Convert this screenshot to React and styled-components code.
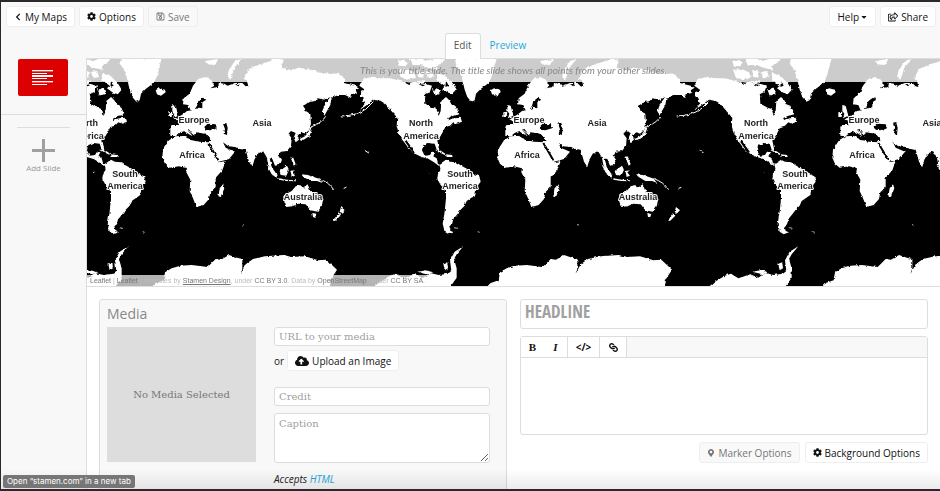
import { useLayoutEffect, useRef, useState } from 'react';
import styled, { createGlobalStyle, css } from 'styled-components';
import {
  FaCaretDown,
  FaChevronLeft,
  FaCloudUploadAlt,
  FaCog,
  FaLink,
  FaMapMarkerAlt,
  FaRegSave,
  FaRegShareSquare,
} from 'react-icons/fa';

const WORLD_WIDTH = 335;
const FIRST_WORLD = -82;

const LABELS = [
  { text: 'North', x: 81, y: 67 },
  { text: 'America', x: 81, y: 80 },
  { text: 'South', x: 120, y: 118 },
  { text: 'America', x: 120, y: 130 },
  { text: 'Europe', x: 189, y: 64 },
  { text: 'Africa', x: 187, y: 99 },
  { text: 'Asia', x: 257, y: 67 },
  { text: 'Australia', x: 298, y: 141 },
];

export default function App() {
  return (
    <Window>
      <GlobalStyle />
      <Toolbar>
        <ToolbarGroup>
          <Button>
            <FaChevronLeft size={8} /> My Maps
          </Button>
          <Button>
            <FaCog size={9} /> Options
          </Button>
          <Button disabled>
            <FaRegSave size={9} /> Save
          </Button>
        </ToolbarGroup>
        <ToolbarGroup>
          <Button $tight>
            Help <FaCaretDown size={8} />
          </Button>
          <Button>
            <FaRegShareSquare size={10} /> Share
          </Button>
        </ToolbarGroup>
      </Toolbar>
      <Tabs>
        <Tab href="#edit" $active>
          Edit
        </Tab>
        <Tab href="#preview">Preview</Tab>
      </Tabs>
      <Workspace>
        <Sidebar>
          <SlideList>
            <SlideThumb aria-label="Title slide">
              <svg width="22" height="16" viewBox="0 0 22 16" fill="#fff">
                <path d="M0 0h21v1H0zM0 3h15v1H0zM0 5h21v2H0zM0 8h15v1H0zM0 11h21v1H0zM0 14h15v1H0z" />
                <path d="M0 1h21v1H0zM0 12h21v1H0z" opacity=".35" />
              </svg>
            </SlideThumb>
          </SlideList>
          <AddSlide>
            <svg width="23" height="23" viewBox="0 0 23 23" fill="#a0a0a0">
              <path d="M10 0h3v10h10v3H13v10h-3V13H0v-3h10z" />
            </svg>
            Add Slide
          </AddSlide>
        </Sidebar>
        <Main>
          <MapPane>
            <WorldMap />
            <MapHint>
              This is your title slide. The title slide shows all points from your other slides.
            </MapHint>
            <Attribution>
              <a href="#leaflet">Leaflet</a> | <a href="#leaflet">Leaflet</a> | Map tiles by{' '}
              <a href="#stamen">
                <u>Stamen Design</u>
              </a>
              , under <a href="#ccby">CC BY 3.0</a>. Data by <a href="#osm">OpenStreetMap</a>, under{' '}
              <a href="#ccbysa">CC BY SA</a>.
            </Attribution>
          </MapPane>
          <Editor>
            <MediaCard>
              <MediaTitle>Media</MediaTitle>
              <MediaGrid>
                <MediaPreview>No Media Selected</MediaPreview>
                <MediaFields>
                  <TextInput aria-label="URL to your media" placeholder="URL to your media" />
                  <UploadRow>
                    or
                    <Button>
                      <FaCloudUploadAlt size={14} /> Upload an Image
                    </Button>
                  </UploadRow>
                  <TextInput aria-label="Credit" placeholder="Credit" />
                  <CaptionInput aria-label="Caption" placeholder="Caption" />
                  <Accepts>
                    Accepts <a href="#html">HTML</a>
                  </Accepts>
                </MediaFields>
              </MediaGrid>
            </MediaCard>
            <TextColumn>
              <HeadlineInput aria-label="Headline" placeholder="HEADLINE" />
              <RichText>
                <RichBar>
                  <RichGroup>
                    <RichButton aria-label="Bold">
                      <b>B</b>
                    </RichButton>
                    <RichButton aria-label="Italic">
                      <b>
                        <i>I</i>
                      </b>
                    </RichButton>
                  </RichGroup>
                  <RichGroup>
                    <CodeButton aria-label="HTML">&lt;/&gt;</CodeButton>
                  </RichGroup>
                  <RichGroup>
                    <LinkButton aria-label="Link">
                      <FaLink size={9} />
                    </LinkButton>
                  </RichGroup>
                </RichBar>
                <RichBody aria-label="Slide text" />
              </RichText>
              <SlideOptions>
                <Button disabled>
                  <FaMapMarkerAlt size={8} /> Marker Options
                </Button>
                <Button>
                  <FaCog size={9} /> Background Options
                </Button>
              </SlideOptions>
            </TextColumn>
          </Editor>
        </Main>
      </Workspace>
      <LinkStatus>Open “stamen.com” in a new tab</LinkStatus>
    </Window>
  );
}

// The land is drawn at three units per pixel and repeated along the equator.
function WorldMap() {
  const svgRef = useRef(null);
  const [width, setWidth] = useState(0);

  useLayoutEffect(() => {
    const measure = () => setWidth(svgRef.current.getBoundingClientRect().width);
    measure();
    window.addEventListener('resize', measure);
    return () => window.removeEventListener('resize', measure);
  }, []);

  const worlds = [];
  for (let x = FIRST_WORLD - WORLD_WIDTH; x < width; x += WORLD_WIDTH) {
    worlds.push(x);
  }

  return (
    <MapSvg ref={svgRef} role="img" aria-label="World map">
      <defs>
        <filter id="coast" x="0" y="0" width="100%" height="100%">
          <feTurbulence type="fractalNoise" baseFrequency="0.3" numOctaves="2" seed="4" />
          <feDisplacementMap in="SourceGraphic" scale="3" xChannelSelector="R" yChannelSelector="G" />
        </filter>
        <g id="world">
          <g transform="scale(0.33333)">
            <g fill="#fff">
              {/* North America and the arctic islands */}
              <path d="M60 112L76 105L58 92L68 72L100 65L120 70L150 70L180 78L200 84L225 80L260 88L276 92L268 115L255 128L256 146L278 158L290 162L296 183L302 168L304 138L318 126L328 136L334 148L346 152L358 178L340 183L325 192L345 190L362 188L366 200L350 206L340 202L330 212L316 216L308 232L300 246L292 256L298 286L290 284L284 266L266 264L250 270L246 286L254 302L270 300L276 290L286 292L280 304L290 310L294 324L304 328L296 332L282 322L266 312L245 306L225 296L210 276L196 258L214 288L220 296L206 280L188 256L176 234L170 212L172 188L154 168L136 146L122 138L102 134L84 148L60 164L76 144L66 138L72 128L60 124Z" />
              <path d="M172 18L192 14L204 24L196 34L176 32ZM210 12L240 10L262 18L290 10L318 10L306 24L288 34L296 44L270 40L244 30L218 30ZM174 44L200 42L222 52L228 68L202 74L182 66ZM232 44L252 50L250 68L234 66ZM258 50L276 48L282 66L264 70ZM290 54L316 62L338 84L350 104L338 118L322 112L306 100L314 92L292 76ZM276 100L296 98L302 116L284 122ZM230 78L256 76L254 84L236 86Z" />
              <path d="M348 10L344 26L358 44L366 70L374 104L382 126L394 140L404 136L408 116L422 102L446 84L454 68L462 40L470 10Z" />
              <path d="M452 106L462 100L480 104L482 112L468 122L456 118Z" />
              <path d="M284 284L300 286L316 296L314 300L298 292ZM318 298L336 300L338 306L320 306Z" />
              {/* South America */}
              <path d="M298 328L318 314L330 320L348 322L364 332L382 342L390 352L418 364L422 380L410 396L406 420L392 430L380 438L374 452L362 464L352 478L340 492L336 508L328 514L332 528L342 532L326 538L314 530L308 506L314 470L318 430L318 408L302 390L292 372L294 356L302 344Z" />
              {/* Europe and Asia */}
              <path d="M496 216L500 210L520 210L518 196L508 194L524 184L536 176L546 168L560 166L582 158L592 160L592 142L604 134L594 128L580 138L576 152L566 168L556 164L550 150L534 148L536 130L554 116L564 92L580 72L600 66L618 74L628 92L616 100L640 96L642 84L658 86L668 92L690 84L712 84L722 94L730 96L726 76L716 72L732 42L760 30L790 20L814 10L836 14L830 38L860 46L880 38L910 42L950 54L1000 56L1020 72L1020 84L1052 92L1064 98L1052 106L1056 114L1036 118L1040 130L1020 120L1000 120L980 128L976 150L958 182L952 168L962 144L976 126L960 134L938 130L926 140L904 146L900 166L916 176L918 206L912 226L900 236L890 232L876 240L882 254L872 262L866 248L872 234L858 228L850 236L860 250L858 272L846 288L828 290L818 300L828 314L822 330L810 332L802 312L794 310L800 336L812 354L804 354L790 330L786 308L774 288L758 296L748 314L742 336L732 320L722 284L704 282L694 276L670 274L654 262L662 278L690 290L672 312L642 320L626 292L608 262L612 248L602 236L572 232L568 242L554 222L546 224L566 246L558 250L538 228L524 234L512 244L496 242Z" />
              <path d="M502 150L512 152L520 182L504 190L508 176L502 168ZM490 172L502 170L500 186L490 186Z" />
              <path d="M666 66L672 44L690 18L710 12L688 38L680 64L676 74ZM600 18L640 12L630 30L606 28Z" />
              {/* Africa */}
              <path d="M492 256L512 244L546 242L554 254L582 260L610 262L624 290L636 312L644 322L662 318L652 346L632 368L632 396L616 412L612 432L596 450L574 456L564 430L554 408L556 374L544 352L546 340L522 334L494 338L480 326L472 308L474 284ZM654 388L658 400L648 426L640 424L644 400Z" />
              {/* Australia and the islands round it */}
              <path d="M838 420L860 408L872 394L886 390L892 400L908 388L916 408L932 418L954 436L950 454L938 470L916 466L902 448L880 446L862 454L844 456L838 440ZM922 474L934 476L930 488L924 486ZM1008 456L1020 466L1010 476L1004 470ZM1002 474L1006 482L990 498L984 496Z" />
              <path d="M784 328L798 340L818 360L814 368L800 358ZM824 348L846 332L852 344L844 362L828 360ZM856 348L870 346L862 352L870 362L860 366ZM888 358L908 360L938 370L952 384L936 378L916 378L896 366ZM884 252L900 244L910 232L916 216L922 218L914 242L900 252L888 258Z" />
              <path d="M820 370L846 374L870 376L870 379L844 378L820 374ZM856 304L864 306L872 328L866 332L860 316Z" />
              {/* Antarctica */}
              <path d="M436 700L452 684L476 676L480 652L500 640L526 632L560 630L608 636L632 612L648 614L672 600L696 608L712 612L712 640L706 658L722 628L744 612L780 604L836 600L860 606L900 604L940 616L964 614L996 644L978 672L974 700ZM96 700L120 680L150 662L168 656L190 670L226 658L250 668L270 654L296 660L324 656L334 648L330 616L344 590L370 574L350 598L342 612L350 640L350 668L328 700Z" />
              <path d="M232 650L256 646L280 652L262 658ZM310 626L322 622L324 640L314 646Z" />
            </g>
            <g fill="#000">
              {/* inland seas */}
              <path d="M598 216L608 206L632 208L636 220L616 226L602 224ZM654 206L664 204L668 218L666 240L656 236L660 222Z" />
              <path d="M254 118L266 112L276 124L292 120L302 136L298 158L284 154L262 146ZM276 88L284 86L292 98L280 108ZM318 76L326 92L316 96ZM300 116L318 116L312 124Z" />
              <path d="M894 152L916 140L942 138L952 152L948 172L934 166L922 178L906 170ZM528 236L542 232L560 242L572 236L586 246L614 246L616 258L584 258L566 252L548 250L536 242Z" />
              <path d="M196 84L214 84L208 90ZM234 86L256 90L248 94ZM690 88L704 86L700 94Z" />
            </g>
            <g fill="none" stroke="#fff" strokeWidth="3">
              <path d="M5 183Q50 182 78 162L100 140M918 216Q950 204 962 184M940 370Q972 382 986 404M550 226L568 240M74 286L86 294M1016 400L1024 397" />
              <path d="M342 518L354 520M413 530L419 532M711 509L717 510M264 352L268 353" opacity=".7" />
            </g>
            <path d="M196 256L222 292M326 192L344 184M610 264L640 316" fill="none" stroke="#000" strokeWidth="6" />
          </g>
        </g>
      </defs>
      <rect width="100%" height="100%" fill="#000" />
      <g filter="url(#coast)">
        <rect width="100%" height="100%" fill="none" />
        {worlds.map((x) => (
          <use key={x} href="#world" x={x} y="-4" />
        ))}
      </g>
      {worlds.map((world) =>
        LABELS.filter(({ x }) => world + x > -5 && world + x < width).map(({ text, x, y }) => (
          <MapLabel key={`${world} ${y} ${text}`} x={world + x} y={y}>
            {text}
          </MapLabel>
        ))
      )}
    </MapSvg>
  );
}

const GlobalStyle = createGlobalStyle`
  * {
    box-sizing: border-box;
  }

  body {
    margin: 0;
    font-family: 'Open Sans', 'Noto Sans', sans-serif;
    font-size: 10px;
    color: #222;
    background: #f8f8f8;
  }

  a {
    color: #1ca8dd;
    text-decoration: none;
  }
`;

const Window = styled.div`
  position: relative;
  display: flex;
  flex-direction: column;
  height: 100vh;
  overflow: hidden;
  background: #f8f8f8;
  border: solid #2b292b;
  border-width: 2px 0 2px 1px;

  &::after {
    content: '';
    position: absolute;
    left: 0;
    right: 0;
    bottom: 0;
    height: 20px;
    background: linear-gradient(rgba(0, 0, 0, 0), rgba(0, 0, 0, 0.08));
    pointer-events: none;
  }
`;

const Toolbar = styled.header`
  display: flex;
  justify-content: space-between;
  padding: 4px 4px 6px 5px;
`;

const ToolbarGroup = styled.div`
  display: flex;
  gap: 4px;
`;

const Button = styled.button`
  display: flex;
  align-items: center;
  gap: ${({ $tight }) => ($tight ? '1px' : '3px')};
  height: 21px;
  padding: 0 7px;
  font: inherit;
  line-height: 14px;
  white-space: nowrap;
  color: #111;
  background: #fff;
  border: 1px solid #eee;
  border-radius: 3px;

  &:disabled {
    color: #777;
    background: #f9f9f9;
  }
`;

const Tabs = styled.nav`
  display: flex;
  justify-content: center;
  padding-left: 39px;
`;

const Tab = styled.a`
  position: relative;
  z-index: 1;
  height: 26px;
  margin-bottom: -1px;
  padding: 0 8px;
  line-height: 22px;
  border: 1px solid transparent;
  border-bottom: 0;
  border-radius: 3px 3px 0 0;

  ${({ $active }) =>
    $active &&
    css`
      color: #555;
      background: #fff;
      border-color: #ddd;
    `}
`;

const Workspace = styled.div`
  display: flex;
  flex: 1;
  min-height: 0;
`;

const Sidebar = styled.aside`
  flex: 0 0 85px;
`;

const SlideList = styled.div`
  padding: 1px 0 18px 17px;
  border-bottom: 1px solid #ddd;
`;

const SlideThumb = styled.button`
  display: flex;
  align-items: center;
  justify-content: center;
  width: 50px;
  height: 37px;
  padding: 0;
  background: #dc0000;
  border: 0;
  border-radius: 2px;
`;

const AddSlide = styled.button`
  display: flex;
  flex-direction: column;
  align-items: center;
  width: 53px;
  margin: 12px 16px 0;
  padding: 11px 0 0;
  font: inherit;
  font-size: 8px;
  line-height: 12px;
  white-space: nowrap;
  color: #999;
  background: none;
  border: 0;
  border-top: 1px solid #ddd;
`;

const Main = styled.main`
  flex: 1;
  min-width: 0;
  background: #fff;
  border-left: 1px solid #ddd;
`;

const MapPane = styled.section`
  position: relative;
  height: 229px;
  border: solid #ddd;
  border-width: 1px 0;
`;

const MapSvg = styled.svg`
  display: block;
  width: 100%;
  height: 100%;
`;

const MapLabel = styled.text`
  font-family: 'Liberation Sans', Arial, sans-serif;
  font-size: 9px;
  font-weight: 700;
  text-anchor: middle;
  fill: #222;
  stroke: #fff;
  stroke-width: 2px;
  stroke-linejoin: round;
  paint-order: stroke;
`;

const MapHint = styled.p`
  position: absolute;
  top: 0;
  left: 0;
  right: 0;
  height: 23px;
  margin: 0;
  font-family: Lato, sans-serif;
  font-style: italic;
  line-height: 23px;
  text-align: center;
  color: #888;
  background: rgba(255, 255, 255, 0.8);
`;

const Attribution = styled.div`
  position: absolute;
  bottom: 0;
  left: 0;
  padding: 0 3px;
  font-family: 'Liberation Sans', Arial, sans-serif;
  font-size: 7px;
  line-height: 11px;
  color: #bbb;
  background: rgba(255, 255, 255, 0.7);

  a {
    color: #777;
  }
`;

const Editor = styled.div`
  display: grid;
  grid-template-columns: 1fr 1fr;
  gap: 13px;
  padding: 12px;
`;

const MediaCard = styled.section`
  padding: 5px 16px 22px 7px;
  background: #f8f8f8;
  border: 1px solid #ddd;
  border-radius: 3px;
`;

const MediaTitle = styled.h2`
  margin: 0 0 4px;
  font-size: 14px;
  font-weight: 400;
  line-height: 18px;
  color: #888;
`;

const MediaGrid = styled.div`
  display: grid;
  grid-template-columns: 149fr 216fr;
  gap: 18px;
`;

const MediaPreview = styled.div`
  display: flex;
  align-items: center;
  justify-content: center;
  height: 135px;
  font-family: 'DejaVu Serif', serif;
  color: #777;
  background: #ddd;
`;

const MediaFields = styled.div`
  display: flex;
  flex-direction: column;
`;

const field = css`
  width: 100%;
  color: #333;
  background: #fff;
  border: 1px solid #ddd;
  border-radius: 3px;

  &::placeholder {
    color: #a0a0a0;
    opacity: 1;
  }
`;

const TextInput = styled.input`
  ${field}
  height: 19px;
  padding: 0 4px;
  font-family: 'DejaVu Serif', serif;
  font-size: 10px;
`;

const UploadRow = styled.div`
  display: flex;
  align-items: center;
  gap: 3px;
  margin: 4px 0 16px;
`;

const CaptionInput = styled.textarea`
  ${field}
  display: block;
  height: 50px;
  margin-top: 7px;
  padding: 4px;
  font-family: 'DejaVu Serif', serif;
  font-size: 10px;
  line-height: 12px;
`;

const Accepts = styled.p`
  margin: 8px 0 0;
  font-style: italic;
  line-height: 16px;
`;

const TextColumn = styled.section`
  display: flex;
  flex-direction: column;
  gap: 7px;
`;

const HeadlineInput = styled.input`
  ${field}
  height: 30px;
  padding: 0 4px 6px;
  font-family: 'Open Sans Condensed', 'Noto Sans Condensed', 'Roboto Condensed', Roboto, sans-serif;
  font-size: 17px;
  font-weight: 700;
`;

const RichText = styled.div`
  background: #fff;
  border: 1px solid #ddd;
  border-radius: 3px;
`;

const RichBar = styled.div`
  display: flex;
  height: 21px;
  background: #f8f8f8;
  border-bottom: 1px solid #ddd;
`;

const RichGroup = styled.div`
  display: flex;
  background: #fff;
  border-right: 1px solid #ddd;
`;

const RichButton = styled.button`
  display: flex;
  align-items: center;
  justify-content: center;
  width: 23px;
  padding: 0;
  font-family: 'Liberation Serif', serif;
  font-size: 11px;
  color: #111;
  background: none;
  border: 0;
`;

const CodeButton = styled(RichButton)`
  width: 31px;
  font-family: 'Open Sans', sans-serif;
  font-size: 10px;
  font-weight: 700;
`;

const LinkButton = styled(RichButton)`
  width: 26px;

  svg {
    transform: rotate(90deg);
  }
`;

const RichBody = styled.textarea`
  display: block;
  width: 100%;
  height: 76px;
  padding: 4px;
  font: inherit;
  background: none;
  border: 0;
  resize: none;
`;

const SlideOptions = styled.div`
  display: flex;
  justify-content: flex-end;
  gap: 5px;
`;

const LinkStatus = styled.div`
  position: absolute;
  z-index: 2;
  bottom: 1px;
  left: 2px;
  padding: 0 4px;
  font-family: Inter, sans-serif;
  font-size: 8px;
  line-height: 13px;
  color: #fff;
  background: #767676;
  border-radius: 2px;
`;
